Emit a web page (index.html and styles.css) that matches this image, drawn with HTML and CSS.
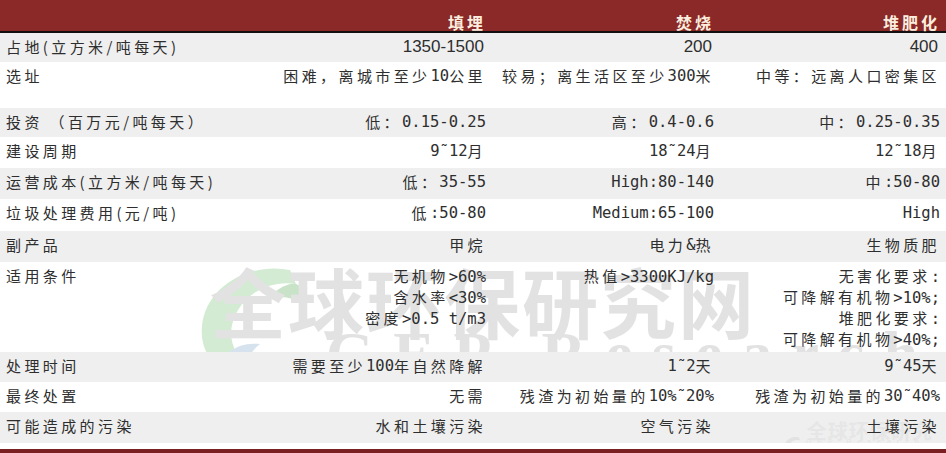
FILE: index.html
```html
<!DOCTYPE html>
<html lang="zh">
<head>
<meta charset="utf-8">
<title>垃圾处理方式比较</title>
<link rel="stylesheet" href="styles.css">
</head>
<body>
<div class="sheet">
  <div class="row head">
    <div class="cell label"></div>
    <div class="cell">填埋</div>
    <div class="cell">焚烧</div>
    <div class="cell">堆肥化</div>
  </div>

  <div class="row grey h29">
    <div class="cell label">占地(立方米/吨每天)</div>
    <div class="cell"><span class="num">1350-1500</span></div>
    <div class="cell"><span class="num">200</span></div>
    <div class="cell"><span class="num">400</span></div>
  </div>

  <div class="row h46">
    <div class="cell label">选址</div>
    <div class="cell">困难，离城市至少<span class="en">10</span>公里</div>
    <div class="cell">较易；离生活区至少<span class="en">300</span>米</div>
    <div class="cell">中等：远离人口密集区</div>
  </div>

  <div class="row grey h29">
    <div class="cell label">投资 （百万元/吨每天）</div>
    <div class="cell">低： <span class="en">0.15-0.25</span></div>
    <div class="cell">高：<span class="en">0.4-0.6</span></div>
    <div class="cell">中： <span class="en">0.25-0.35</span></div>
  </div>

  <div class="row h31">
    <div class="cell label">建设周期</div>
    <div class="cell"><span class="en">9˜12</span>月</div>
    <div class="cell"><span class="en">18˜24</span>月</div>
    <div class="cell"><span class="en">12˜18</span>月</div>
  </div>

  <div class="row grey h31">
    <div class="cell label">运营成本(立方米/吨每天)</div>
    <div class="cell">低：<span class="en">35-55</span></div>
    <div class="cell"><span class="en">High:80-140</span></div>
    <div class="cell">中<span class="en">:50-80</span></div>
  </div>

  <div class="row h32">
    <div class="cell label">垃圾处理费用(元/吨)</div>
    <div class="cell">低<span class="en">:50-80</span></div>
    <div class="cell"><span class="en">Medium:65-100</span></div>
    <div class="cell"><span class="en">High</span></div>
  </div>

  <div class="row grey h31">
    <div class="cell label">副产品</div>
    <div class="cell">甲烷</div>
    <div class="cell">电力<span class="en">&amp;</span>热</div>
    <div class="cell">生物质肥</div>
  </div>

  <div class="row h90 marked">
    <div class="watermark" aria-hidden="true">
      <svg class="wm-logo" width="124" height="100" viewBox="0 0 124 100">
        <path d="M100 6 C60 -2 16 22 12 62 C10 80 18 96 28 100 L58 100 C40 88 36 66 48 46 C60 26 84 16 106 20 Z" fill="#d3ead3"/>
        <path d="M106 20 C116 24 118 36 110 40 C100 30 84 32 72 40 C84 26 98 18 106 20 Z" fill="#c9e3c9"/>
        <path d="M28 100 C40 84 52 78 70 80 C62 86 58 94 58 100 Z" fill="#d6e3ef"/>
      </svg>
      <div class="wm-cn">全球环保研究网</div>
      <div class="wm-en">GEP Research</div>
    </div>
    <div class="cell label">适用条件</div>
    <div class="cell stack">
      <span>无机物<span class="en">&gt;60%</span></span>
      <span>含水率<span class="en">&lt;30%</span></span>
      <span>密度<span class="en">&gt;0.5 t/m3</span></span>
    </div>
    <div class="cell stack">
      <span>热值<span class="en">&gt;3300KJ/kg</span></span>
    </div>
    <div class="cell stack">
      <span>无害化要求<span class="en">:</span></span>
      <span>可降解有机物<span class="en">&gt;10%;</span></span>
      <span>堆肥化要求<span class="en">:</span></span>
      <span>可降解有机物<span class="en">&gt;40%;</span></span>
    </div>
  </div>

  <div class="row grey h30">
    <div class="cell label">处理时间</div>
    <div class="cell">需要至少<span class="en">100</span>年自然降解</div>
    <div class="cell"><span class="en">1˜2</span>天</div>
    <div class="cell"><span class="en">9˜45</span>天</div>
  </div>

  <div class="row h30">
    <div class="cell label">最终处置</div>
    <div class="cell">无需</div>
    <div class="cell">残渣为初始量的<span class="en">10%˜20%</span></div>
    <div class="cell">残渣为初始量的<span class="en">30˜40%</span></div>
  </div>

  <div class="row grey h31 marked">
    <div class="mini-mark" aria-hidden="true">
      <svg width="22" height="22" viewBox="0 0 22 22">
        <path d="M18 3 C9 1 2 7 3 14 C4 19 8 21 11 21 C7 18 6 13 9 9 C11 6 15 5 19 6 Z" fill="#e2e2e2"/>
      </svg>
      <span class="mini-cn">全球环保研究网</span>
      <span class="mini-en">GEP Research</span>
    </div>
    <div class="cell label">可能造成的污染</div>
    <div class="cell">水和土壤污染</div>
    <div class="cell">空气污染</div>
    <div class="cell">土壤污染</div>
  </div>

  <div class="foot"></div>
</div>
</body>
</html>
```

FILE: styles.css
```css
html, body {
  margin: 0;
  padding: 0;
  background: #ffffff;
}

.sheet {
  width: 946px;
  height: 453px;
  display: flex;
  flex-direction: column;
  overflow: hidden;
  font-family: "Noto Sans CJK SC", "Noto Sans", sans-serif;
  color: #2e2e2e;
}

.row {
  display: grid;
  grid-template-columns: 262px 228px 228px 226px;
  background: #ffffff;
}

.row.grey { background: #efefef; }

.row.marked {
  position: relative;
  overflow: hidden;
}

.h29 { height: 29px; }
.h30 { height: 30px; }
.h31 { height: 31px; }
.h32 { height: 32px; }
.h46 { height: 46px; }
.h90 { height: 90px; }

.cell {
  position: relative;
  display: flex;
  justify-content: flex-end;
  align-items: flex-start;
  padding: 3px 4px 0 0;
  font-size: 15px;
  line-height: 22px;
  letter-spacing: 3.4px;
  white-space: nowrap;
}

.cell.label {
  justify-content: flex-start;
  padding-left: 6px;
}

.cell.stack {
  flex-direction: column;
  align-items: flex-end;
  justify-content: flex-start;
  padding-top: 3px;
}

.cell.stack > span {
  display: block;
  height: 21px;
  line-height: 21px;
}

.en {
  font-family: "DejaVu Sans Mono", monospace;
  font-size: 15.5px;
  letter-spacing: 0;
}

.num {
  font-family: "Liberation Sans", Arial, sans-serif;
  font-size: 17px;
  letter-spacing: 0;
  margin-right: 2px;
}

.head {
  height: 31px;
  background: #8b2828;
  border-bottom: 2px solid #151010;
}

.head .cell {
  padding-top: 12px;
  line-height: 20px;
  font-size: 16px;
  font-weight: 700;
  letter-spacing: 3px;
  color: #fbeede;
}

.foot {
  margin-top: auto;
  height: 4px;
  background: #7a1f22;
}

/* watermark in the 适用条件 row */
.watermark {
  position: absolute;
  left: 186px;
  top: 2px;
  width: 620px;
  height: 120px;
  pointer-events: none;
}

.wm-logo {
  position: absolute;
  left: 4px;
  top: 0;
}

.wm-cn {
  position: absolute;
  left: 24px;
  top: -6px;
  font-family: "Noto Sans CJK SC", sans-serif;
  font-weight: 700;
  font-size: 76px;
  line-height: 84px;
  letter-spacing: 2px;
  color: #e2e2e2;
  white-space: nowrap;
}

.wm-en {
  position: absolute;
  left: 140px;
  top: 54px;
  font-family: "Liberation Serif", serif;
  font-weight: 700;
  font-size: 62px;
  line-height: 70px;
  letter-spacing: 19px;
  color: #e2e2e2;
  white-space: nowrap;
}

/* faint mark in the last row */
.mini-mark {
  position: absolute;
  left: 782px;
  top: 4px;
  display: flex;
  align-items: center;
  gap: 4px;
  pointer-events: none;
}

.mini-cn {
  font-family: "Noto Sans CJK SC", sans-serif;
  font-size: 20px;
  font-weight: 700;
  color: #e6e6e6;
  letter-spacing: 1px;
}

.mini-en {
  position: absolute;
  left: 24px;
  top: 22px;
  font-family: "Liberation Sans", sans-serif;
  font-size: 7px;
  letter-spacing: 6px;
  color: #e3e3e3;
}
```
